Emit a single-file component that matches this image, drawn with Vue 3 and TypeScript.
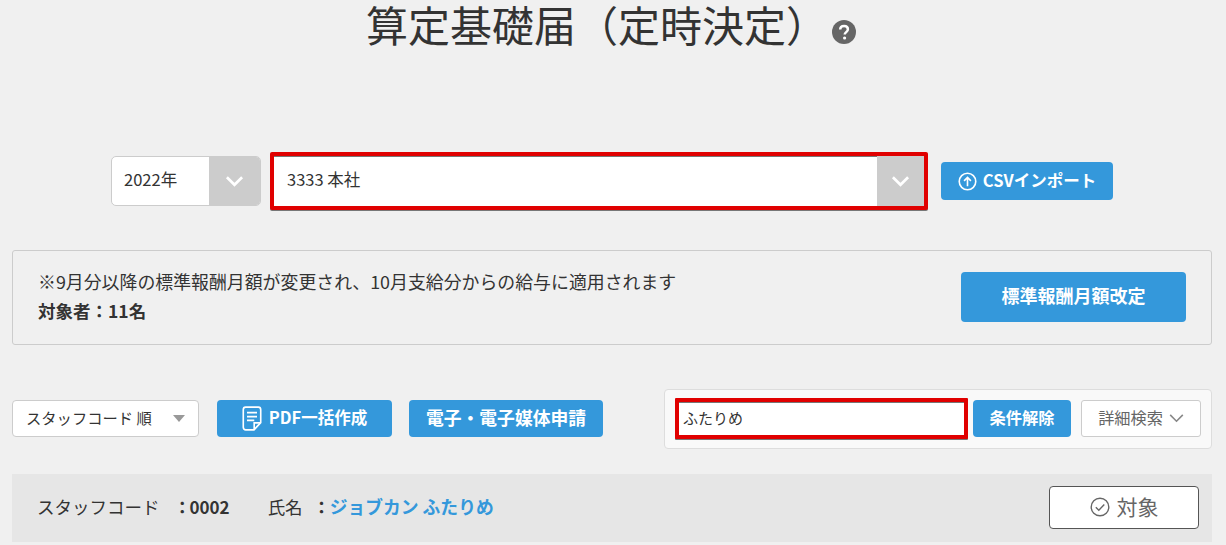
<script setup lang="ts">
const notice = '※9月分以降の標準報酬月額が変更され、10月支給分からの給与に適用されます'
</script>

<template>
  <div class="page">
    <header class="title-row">
      <h1 class="title">算定基礎届（定時決定）</h1>
      <svg class="help" viewBox="0 0 24 24" width="24" height="24">
        <circle cx="12" cy="12" r="12" fill="#666" />
        <path d="M8.2 9.6c0-2.3 1.7-3.7 3.9-3.7s3.8 1.3 3.8 3.3c0 2.9-3.2 2.9-3.2 5.4" fill="none" stroke="#fff" stroke-width="2.5" />
        <circle cx="12.6" cy="18" r="1.6" fill="#fff" />
      </svg>
    </header>

    <section class="select-row">
      <div class="select year">
        <span class="select-text">2022年</span>
        <span class="select-arrow">
          <svg viewBox="0 0 20 12" width="19" height="12"><path d="M2 2l8 8 8-8" fill="none" stroke="#fff" stroke-width="2.800" /></svg>
        </span>
      </div>
      <div class="select office">
        <span class="select-text">3333 本社</span>
        <span class="select-arrow">
          <svg viewBox="0 0 20 12" width="19" height="12"><path d="M2 2l8 8 8-8" fill="none" stroke="#fff" stroke-width="2.800" /></svg>
        </span>
      </div>
      <button class="btn csv">
        <svg class="btn-icon" viewBox="0 0 20 20" width="19" height="19">
          <circle cx="10" cy="10" r="8.700" fill="none" stroke="#fff" stroke-width="1.700" />
          <path d="M10 15V6M6.4 9.4L10 5.8l3.6 3.6" fill="none" stroke="#fff" stroke-width="1.700" />
        </svg>
        CSVインポート
      </button>
    </section>

    <section class="notice">
      <div class="notice-text">
        <p class="notice-line">{{ notice }}</p>
        <p class="notice-count">対象者：11名</p>
      </div>
      <button class="btn revise">標準報酬月額改定</button>
    </section>

    <section class="toolbar">
      <div class="sort">
        <span class="sort-text">スタッフコード 順</span>
        <i class="caret"></i>
      </div>
      <button class="btn pdf">
        <svg class="btn-icon" viewBox="0 0 22 26" width="20" height="25" preserveAspectRatio="none">
          <path d="M4 1.2h14a2.6 2.6 0 0 1 2.6 2.6v13.5l-7.4 7.5H4a2.6 2.6 0 0 1-2.6-2.6V3.8A2.6 2.6 0 0 1 4 1.2z" fill="none" stroke="#fff" stroke-width="1.800" />
          <path d="M5.5 7h11M5.5 11h11M5.5 15h8M13.4 24v-6.400h7" fill="none" stroke="#fff" stroke-width="1.800" />
        </svg>
        PDF一括作成
      </button>
      <button class="btn media">電子・電子媒体申請</button>

      <div class="search">
        <div class="search-input"><span class="input-text">ふたりめ</span></div>
        <button class="btn clear">条件解除</button>
        <button class="detail">
          <span class="detail-text">詳細検索</span>
          <svg viewBox="0 0 16 10" width="15" height="9"><path d="M1 1l7 7 7-7" fill="none" stroke="#888" stroke-width="1.8" /></svg>
        </button>
      </div>
    </section>

    <section class="staff">
      <div class="staff-info">
        <span class="label">スタッフコード</span>
        <span class="colon first-colon">：</span>
        <span class="value">0002</span>
        <span class="label name-label">氏名</span>
        <span class="colon second-colon">：</span>
        <a class="name">ジョブカン ふたりめ</a>
      </div>
      <button class="target">
        <svg viewBox="0 0 20 20" width="20" height="20">
          <circle cx="10" cy="10" r="8.800" fill="none" stroke="#666" stroke-width="1.400" />
          <path d="M5.800 10.200l3 3 5.500-5.600" fill="none" stroke="#666" stroke-width="1.400" />
        </svg>
        <span class="target-text">対象</span>
      </button>
    </section>
  </div>
</template>

<style>
html, body { margin: 0; background: #f0f0f0; }
</style>

<style scoped>
.page {
  width: 1226px;
  height: 545px;
  box-sizing: border-box;
  padding: 0 14px 0 12px;
  background: #f0f0f0;
  color: #333;
  font-family: "Noto Sans CJK JP", "Noto Sans", sans-serif;
}
.title-row {
  height: 54px;
  display: flex;
  align-items: flex-start;
  justify-content: center;
}
.title {
  margin: 0 0 0 -2px;
  font-size: 42px;
  font-weight: 400;
  line-height: 48px;
  color: #333;
}
.help { margin: 20px 0 0 4px; }

.select-row {
  display: flex;
  align-items: center;
  height: 58px;
  margin-top: 98px;
  padding-left: 99px;
}
.select {
  display: flex;
  box-sizing: border-box;
  background: #fff;
  overflow: hidden;
}
.select-text {
  flex: 1;
  font-size: 16.500px;
  line-height: 1;
  align-self: center;
  padding-bottom: 4px;
}
.select-arrow {
  display: flex;
  align-items: center;
  justify-content: center;
  background: #ccc;
}
.year {
  width: 150px;
  height: 50px;
  border: 1px solid #ccc;
  border-radius: 5px;
}
.year .select-text { padding-left: 12px; }
.year .select-arrow { width: 51px; }
.office {
  width: 658px;
  height: 58px;
  margin-left: 9px;
  border: 4px solid #e00000;
  border-radius: 2px;
  box-shadow: inset 0 1px 0 #777, 0 1px 0 #777;
}
.office .select-text { padding-left: 13px; }
.office .select-arrow { width: 47px; }

.btn {
  display: flex;
  align-items: center;
  justify-content: center;
  box-sizing: border-box;
  border: 0;
  padding: 0 0 3px;
  border-radius: 4px;
  background: #3498db;
  color: #fff;
  font-family: inherit;
  font-weight: 700;
  font-size: 18px;
}
.btn-icon { margin-top: 3px; }
.csv { width: 172px; height: 38px; margin-left: 13px; gap: 6px; font-size: 16.500px; }

.notice {
  display: flex;
  align-items: center;
  justify-content: space-between;
  box-sizing: border-box;
  width: 1200px;
  height: 95px;
  margin-top: 40px;
  padding: 0 25px 0 25px;
  border: 1px solid #ccc;
  border-radius: 3px;
}
.notice-text { padding-bottom: 4px; }
.notice-line { margin: 0 0 8px; font-size: 17.900px; line-height: 22px; }
.notice-count { margin: 0; font-size: 17.500px; line-height: 22px; font-weight: 700; }
.revise { width: 225px; height: 50px; margin-top: -1px; margin-bottom: 1px; }

.toolbar {
  display: flex;
  align-items: flex-start;
  width: 1200px;
  height: 60px;
  margin-top: 44px;
}
.sort {
  display: flex;
  align-items: center;
  justify-content: space-between;
  box-sizing: border-box;
  width: 187px;
  height: 37px;
  margin-top: 11px;
  padding: 0 13px;
  background: #fff;
  border: 1px solid #ccc;
  border-radius: 4px;
  font-size: 15.300px;
}
.sort-text { padding-bottom: 3px; }
.caret {
  width: 0;
  height: 0;
  border-left: 6.500px solid transparent;
  border-right: 6.500px solid transparent;
  border-top: 7px solid #999;
}
.pdf { width: 175px; height: 37px; margin: 11px 0 0 18px; gap: 7px; font-size: 16.500px; }
.media { width: 194px; height: 37px; margin: 11px 0 0 17px; font-size: 17.800px; }

.search {
  display: flex;
  align-items: flex-start;
  box-sizing: border-box;
  width: 548px;
  height: 60px;
  margin-left: 61px;
  padding: 8px 10px 0;
  background: #f9f9f9;
  border: 1px solid #ddd;
  border-radius: 4px;
}
.search-input {
  display: flex;
  align-items: center;
  box-sizing: border-box;
  width: 293px;
  height: 41px;
  padding-left: 4px;
  background: #fff;
  border: 4px solid #e00000;
  border-radius: 1px;
  box-shadow: inset 0 1px 0 #777, 0 1px 0 #777;
  font-size: 15px;
}
.input-text { padding-bottom: 3px; }
.clear { width: 98px; height: 37px; margin: 2px 0 0 5px; font-size: 16.300px; }
.detail {
  display: flex;
  align-items: center;
  justify-content: center;
  gap: 6px;
  box-sizing: border-box;
  width: 120px;
  height: 37px;
  margin: 2px 0 0 10px;
  padding: 0 0 0 0;
  background: #fff;
  border: 1px solid #ccc;
  border-radius: 3px;
  color: #666;
  font-family: inherit;
  font-size: 16.200px;
}
.detail-text { padding-bottom: 3px; }

.staff {
  display: flex;
  align-items: center;
  justify-content: space-between;
  box-sizing: border-box;
  width: 1200px;
  height: 68px;
  margin-top: 25px;
  padding: 0 13px 0 25px;
  background: #e6e6e6;
}
.staff-info { display: flex; align-items: center; font-size: 17.500px; padding-bottom: 4px; }
.value { font-weight: 700; font-size: 17px; }
.name-label { margin-left: 38px; }
.colon { width: 18px; font-weight: 700; }
.first-colon { margin: 0 -2px 0 14px; }
.second-colon { margin: 0 -1px 0 10px; }
.name { color: #3498db; font-weight: 700; font-size: 17.800px; }
.target {
  display: flex;
  align-items: center;
  justify-content: center;
  gap: 7px;
  box-sizing: border-box;
  width: 150px;
  height: 43px;
  margin-bottom: 2px;
  padding: 0;
  background: #fff;
  border: 1px solid #555;
  border-radius: 4px;
  color: #666;
  font-family: inherit;
  font-size: 21px;
}
.target-text { padding-bottom: 2px; }
</style>
